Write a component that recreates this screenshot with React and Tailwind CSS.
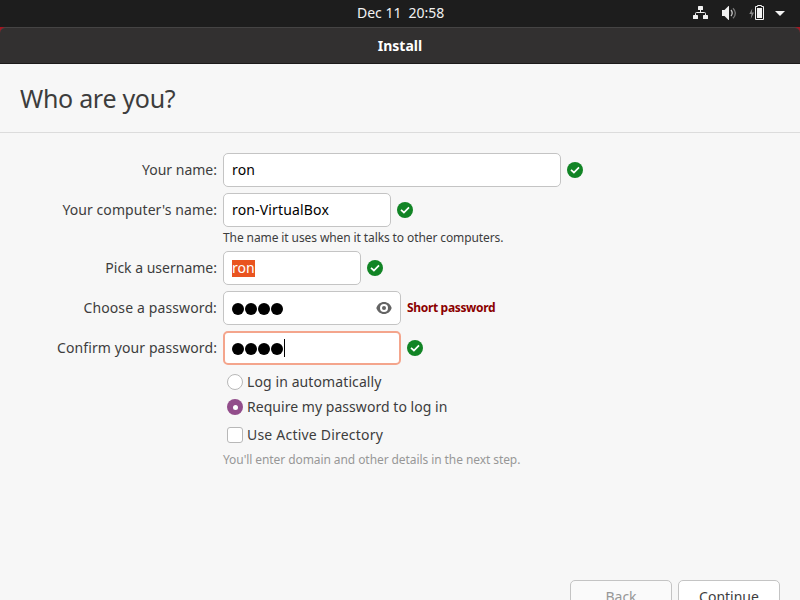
import React from "react";

function Check() {
  return (
    <svg className="ml-1.5 size-4 shrink-0" viewBox="0 0 16 16">
      <circle cx="8" cy="8" r="8" fill="#118425" />
      <path d="M4 7.9 6.9 10.5 12 5.300" fill="none" stroke="#fff" strokeWidth="1.7" />
    </svg>
  );
}

function Row({ label, spacing, children }) {
  return (
    <div className="flex h-[34px] items-center">
      <div className={`w-[217px] shrink-0 whitespace-nowrap pb-0.5 text-right ${spacing}`}>{label}</div>
      <div className="ml-1.5 flex items-center">{children}</div>
    </div>
  );
}

function Field({ width, children }) {
  return (
    <div className={`flex h-[34px] items-center rounded-[5px] border border-[#c4c4c4] bg-white pl-2 text-black ${width}`}>
      {children}
    </div>
  );
}

function Dots() {
  return (
    <div className="mt-[2px] flex gap-px">
      {[0, 1, 2, 3].map((i) => (
        <span key={i} className="size-[12px] rounded-full bg-black" />
      ))}
    </div>
  );
}

function TopBar() {
  return (
    <header className="grid h-[27px] grid-cols-[357px_1fr_auto] items-center bg-[#1d1d1d] text-[14px] text-[#f2f2f2]">
      <span />
      <div className="flex gap-[7px] pb-0.5 leading-[25px]">
        <span>Dec 11</span>
        <span>20:58</span>
      </div>
      <svg className="h-[27px] w-[120px]" viewBox="680 0 120 27" fill="#f2f2f2">
        <rect x="698" y="6" width="5" height="4" rx=".6" />
        <rect x="693" y="15" width="5" height="4" rx=".6" />
        <rect x="703" y="15" width="5" height="4" rx=".6" />
        <path d="M700.5 10v2.500M695.500 15v-1.500q0-1 1-1h8q1 0 1 1V15" fill="none" stroke="#f2f2f2" />
        <path d="M722 10h2.500l4-4h.5v14h-.5l-4-4H722z" />
        <path d="M731 10q2.400 3 0 6" fill="none" stroke="#c8c8c8" strokeWidth="1.3" />
        <path d="M733 8.200q4.800 5 0 10" fill="none" stroke="#777" strokeWidth="1.3" />
        <path d="M752.300 8.500l-3 5.500h2.200l-.8 5 3.300-6.500h-2.200z" fill="#8a8a8a" />
        <path d="M757.500 5.500h4v1h2v13h-8v-13h2z" fill="none" stroke="#f2f2f2" />
        <rect x="757" y="8" width="5" height="10" />
        <path d="M775 11h10l-5 5z" />
      </svg>
    </header>
  );
}

export default function App() {
  return (
    <div className="flex h-[600px] w-[800px] flex-col overflow-hidden bg-[#f7f7f7] font-['Noto_Sans','Open_Sans',sans-serif] text-[14px] text-[#3d3d3d]">
      <TopBar />
      <div className="h-[37px] shrink-0 bg-[#a31621]">
        <div className="h-full rounded-t-[6px] border-t border-b border-t-[#454444] border-b-[#1c1a1a] bg-[#323030] text-center font-bold leading-[35px] text-white">
          <span>Install</span>
        </div>
      </div>
      <div className="flex h-[69px] shrink-0 items-center border-b border-[#dcdcdc] pl-5 pt-0.5 text-[25px]">
        <h1 className="tracking-[-0.3px]">Who are you?</h1>
      </div>

      <main className="flex h-[447px] shrink-0 flex-col pt-5">
        <Row label="Your name:" spacing="tracking-[0px]">
          <Field width="w-[338px]"><span className="pb-0.5 tracking-[0.15px]">ron</span></Field>
          <Check />
        </Row>
        <div className="h-1.5" />
        <Row label="Your computer's name:" spacing="tracking-[0.08px]">
          <Field width="w-[168px]"><span className="pb-0.5 tracking-[0.16px]">ron-VirtualBox</span></Field>
          <Check />
        </Row>
        <p className="ml-[223px] h-6 text-[12px] leading-[22px] tracking-[-0.1px]"><span>The name it uses when it talks to other computers.</span></p>
        <Row label="Pick a username:" spacing="tracking-[0px]">
          <Field width="w-[138px]">
            <span className="h-[17px] bg-[#e95420] leading-[15px] text-white">ron</span>
          </Field>
          <Check />
        </Row>
        <div className="h-1.5" />
        <Row label="Choose a password:" spacing="tracking-[0.12px]">
          <Field width="w-[178px]">
            <Dots />
            <svg className="ml-auto mr-2 size-4" viewBox="0 0 16 16">
              <path d="M8 2C4.400 2 1.500 4.300.3 8c1.200 3.700 4.100 6 7.700 6s6.500-2.300 7.700-6C14.500 4.300 11.600 2 8 2z" fill="#646464" />
              <circle cx="8" cy="8" r="4" fill="#fff" />
              <circle cx="8" cy="8" r="2" fill="#646464" />
            </svg>
          </Field>
          <span className="ml-1.5 text-[12px] font-bold tracking-[-0.33px] text-[#8b0000]">Short password</span>
        </Row>
        <div className="h-1.5" />
        <Row label="Confirm your password:" spacing="tracking-[0.1px]">
          <div className="flex h-[34px] w-[178px] items-center rounded-[5px] border-2 border-[#f4a58c] bg-white pl-[7px]">
            <Dots />
            <span className="ml-px h-[18px] w-px bg-black" />
          </div>
          <Check />
        </Row>

        <div className="ml-[227px] mt-2 flex h-[18px] items-center gap-1">
          <span className="size-4 rounded-full border border-[#b8b8b8] bg-white" />
          <span className="pb-0.5 tracking-[0.1px]">Log in automatically</span>
        </div>
        <div className="ml-[227px] mt-[7px] flex h-[18px] items-center gap-1">
          <span className="flex size-4 items-center justify-center rounded-full bg-[#924d8b]">
            <span className="size-[5px] rounded-full bg-white" />
          </span>
          <span className="pb-0.5 tracking-[0.04px]">Require my password to log in</span>
        </div>
        <div className="ml-[227px] mt-[10px] flex h-[18px] items-center gap-1">
          <span className="size-4 rounded-[3px] border border-[#b8b8b8] bg-white" />
          <span className="pb-0.5 tracking-[0.21px]">Use Active Directory</span>
        </div>
        <p className="ml-[223px] mt-[7px] text-[12px] leading-[18px] tracking-[-0.08px] text-[#979797]"><span>You'll enter domain and other details in the next step.</span></p>
      </main>

      <footer className="flex shrink-0 justify-end gap-1.5 pr-5 leading-[32px]">
        <button className="h-[34px] w-[102px] rounded-[5px] border border-[#c4c4c4] bg-[#fafafa] text-[#979797]">Back</button>
        <button className="h-[34px] w-[102px] rounded-[5px] border border-[#c4c4c4] bg-white">Continue</button>
      </footer>
    </div>
  );
}
